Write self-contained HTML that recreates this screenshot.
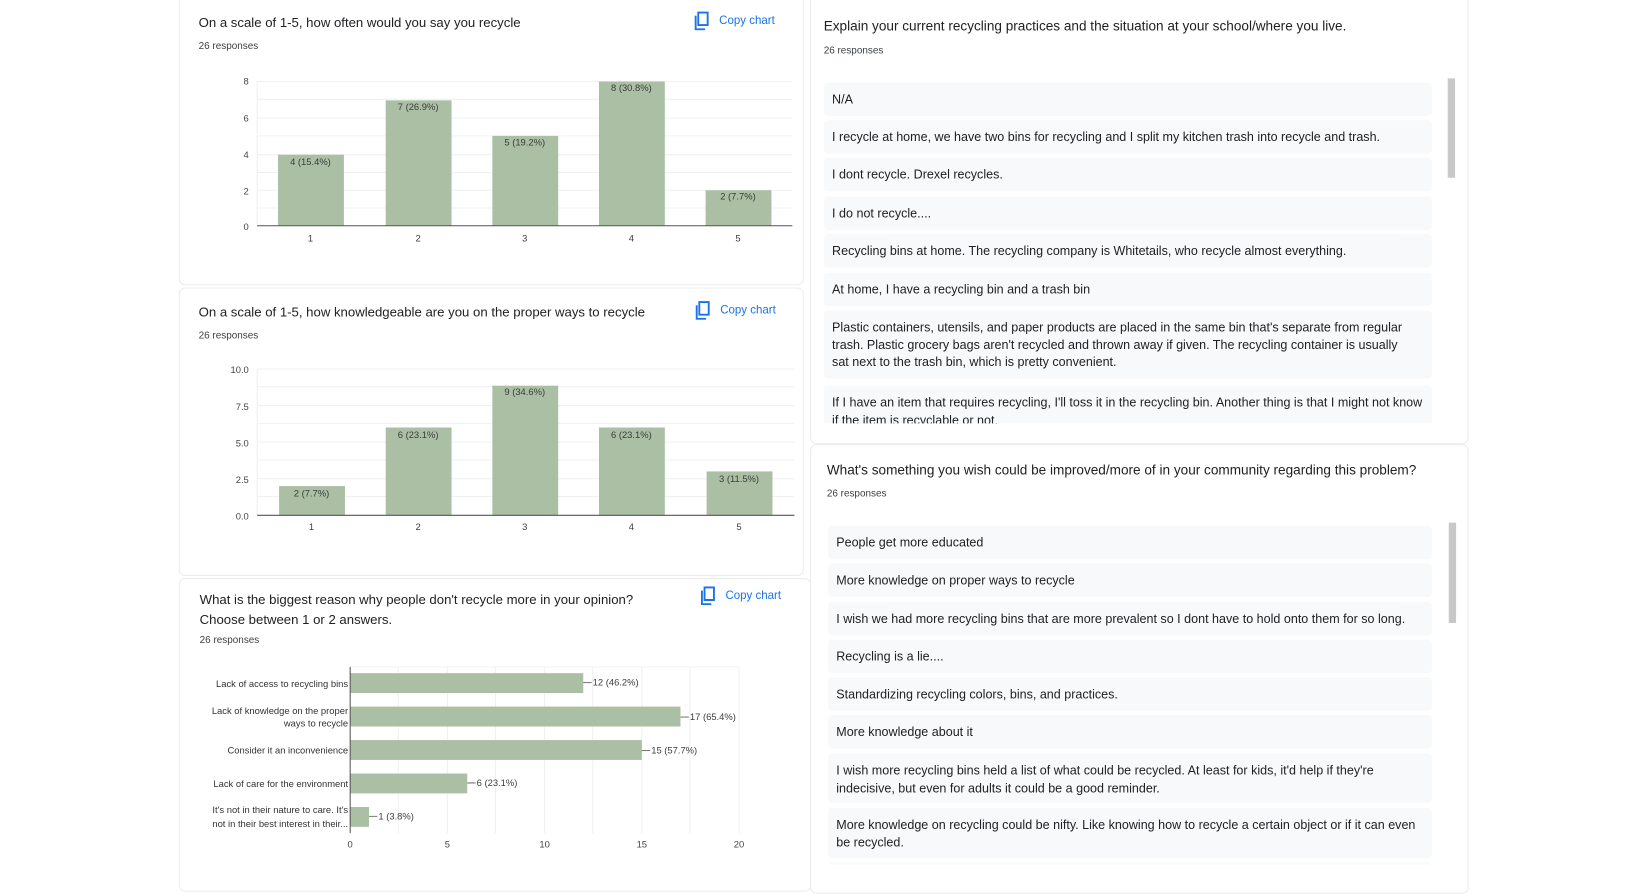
<!DOCTYPE html>
<html><head><meta charset="utf-8"><style>
html,body{margin:0;padding:0;background:#fff;width:1637px;height:880px;overflow:hidden}
#w{position:absolute;left:0;top:0;width:1566px;height:843px;transform:scale(1.0453);transform-origin:0 0;font-family:"Liberation Sans",Arial,sans-serif;color:#202124}
.card{position:absolute;background:#fff;border:1px solid #ececec;border-radius:6px;box-sizing:border-box}
.t{position:absolute;font-size:12.6px;color:#202124;white-space:nowrap}
.r{position:absolute;font-size:9.5px;color:#3c4043}
.cc{position:absolute;font-size:11px;color:#1a73e8}
.cc svg{position:absolute;left:-24px;top:-3px}
.item{position:absolute;background:#f8f9fa;border-radius:4px;font-size:12px;line-height:16.5px;color:#202124;padding:8px 8px;box-sizing:border-box}
.sb{position:absolute;width:7px;background:#c8c8c8}
svg text{font-family:"Liberation Sans",Arial,sans-serif}
</style></head><body><div id="w">

<div class="card" style="left:171px;top:-6px;width:598px;height:279px"></div>
<div class="card" style="left:171px;top:275px;width:598px;height:276px"></div>
<div class="card" style="left:171px;top:553px;width:605px;height:300px"></div>
<div class="card" style="left:775px;top:-6px;width:630px;height:431px"></div>
<div class="card" style="left:775px;top:425px;width:630px;height:430px"></div>

<div class="t" style="left:190px;top:15px">On a scale of 1-5, how often would you say you recycle</div>
<div class="r" style="left:190px;top:39px">26 responses</div>
<div class="cc" style="left:688px;top:14px"><svg width="16" height="18" viewBox="0 0 16 18"><path d="M4 1h9v12H4z" fill="none" stroke="#1a73e8" stroke-width="1.8"/><path d="M1.5 4v13h9" fill="none" stroke="#1a73e8" stroke-width="1.8"/></svg>Copy chart</div>

<div class="t" style="left:190px;top:292px">On a scale of 1-5, how knowledgeable are you on the proper ways to recycle</div>
<div class="r" style="left:190px;top:316px">26 responses</div>
<div class="cc" style="left:689px;top:291px"><svg width="16" height="18" viewBox="0 0 16 18"><path d="M4 1h9v12H4z" fill="none" stroke="#1a73e8" stroke-width="1.8"/><path d="M1.5 4v13h9" fill="none" stroke="#1a73e8" stroke-width="1.8"/></svg>Copy chart</div>

<div class="t" style="left:191px;top:565px;line-height:19px">What is the biggest reason why people don't recycle more in your opinion?<br>Choose between 1 or 2 answers.</div>
<div class="r" style="left:191px;top:607px">26 responses</div>
<div class="cc" style="left:694px;top:564px"><svg width="16" height="18" viewBox="0 0 16 18"><path d="M4 1h9v12H4z" fill="none" stroke="#1a73e8" stroke-width="1.8"/><path d="M1.5 4v13h9" fill="none" stroke="#1a73e8" stroke-width="1.8"/></svg>Copy chart</div>

<svg style="position:absolute;left:0;top:0" width="780" height="843">
<g font-size="9" fill="#444">
<g stroke="#f0f0f0"><line x1="246" y1="78" x2="758" y2="78"/><line x1="246" y1="95" x2="758" y2="95"/><line x1="246" y1="113" x2="758" y2="113"/><line x1="246" y1="130" x2="758" y2="130"/><line x1="246" y1="148" x2="758" y2="148"/><line x1="246" y1="165" x2="758" y2="165"/><line x1="246" y1="182" x2="758" y2="182"/><line x1="246" y1="199" x2="758" y2="199"/><line x1="246" y1="78" x2="246" y2="216"/></g>
<g fill="#aabfa4"><rect x="266" y="148" width="63" height="68"/><rect x="369" y="96" width="63" height="120"/><rect x="471" y="130" width="63" height="86"/><rect x="573" y="78" width="63" height="138"/><rect x="675" y="182" width="63" height="34"/></g>
<line x1="246" y1="216" x2="758" y2="216" stroke="#555"/>
<g text-anchor="end"><text x="238" y="81">8</text><text x="238" y="116">6</text><text x="238" y="151">4</text><text x="238" y="186">2</text><text x="238" y="220">0</text></g>
<g text-anchor="middle" fill="#3c3c3c"><text x="297" y="158">4 (15.4%)</text><text x="400" y="105">7 (26.9%)</text><text x="502" y="139">5 (19.2%)</text><text x="604" y="87">8 (30.8%)</text><text x="706" y="191">2 (7.7%)</text>
<text x="297" y="231">1</text><text x="400" y="231">2</text><text x="502" y="231">3</text><text x="604" y="231">4</text><text x="706" y="231">5</text></g>
<g stroke="#f0f0f0"><line x1="246" y1="353" x2="760" y2="353"/><line x1="246" y1="370" x2="760" y2="370"/><line x1="246" y1="388" x2="760" y2="388"/><line x1="246" y1="405" x2="760" y2="405"/><line x1="246" y1="423" x2="760" y2="423"/><line x1="246" y1="440" x2="760" y2="440"/><line x1="246" y1="458" x2="760" y2="458"/><line x1="246" y1="475" x2="760" y2="475"/><line x1="246" y1="353" x2="246" y2="493"/></g>
<g fill="#aabfa4"><rect x="267" y="465" width="63" height="28"/><rect x="369" y="409" width="63" height="84"/><rect x="471" y="369" width="63" height="124"/><rect x="573" y="409" width="63" height="84"/><rect x="676" y="451" width="63" height="42"/></g>
<line x1="246" y1="493" x2="760" y2="493" stroke="#555"/>
<g text-anchor="end"><text x="238" y="357">10.0</text><text x="238" y="392">7.5</text><text x="238" y="427">5.0</text><text x="238" y="462">2.5</text><text x="238" y="497">0.0</text></g>
<g text-anchor="middle" fill="#3c3c3c"><text x="298" y="475">2 (7.7%)</text><text x="400" y="419">6 (23.1%)</text><text x="502" y="378">9 (34.6%)</text><text x="604" y="419">6 (23.1%)</text><text x="707" y="461">3 (11.5%)</text>
<text x="298" y="507">1</text><text x="400" y="507">2</text><text x="502" y="507">3</text><text x="604" y="507">4</text><text x="707" y="507">5</text></g>
<g stroke="#f0f0f0"><line x1="381" y1="638" x2="381" y2="797"/><line x1="428" y1="638" x2="428" y2="797"/><line x1="474" y1="638" x2="474" y2="797"/><line x1="521" y1="638" x2="521" y2="797"/><line x1="567" y1="638" x2="567" y2="797"/><line x1="614" y1="638" x2="614" y2="797"/><line x1="660" y1="638" x2="660" y2="797"/><line x1="707" y1="638" x2="707" y2="797"/><line x1="335" y1="638" x2="707" y2="638"/></g>
<g fill="#aabfa4"><rect x="335" y="644" width="223" height="19"/><rect x="335" y="676" width="316" height="19"/><rect x="335" y="708" width="279" height="19"/><rect x="335" y="740" width="112" height="19"/><rect x="335" y="772" width="18" height="19"/></g>
<line x1="335" y1="638" x2="335" y2="797" stroke="#555"/>
<g stroke="#777"><line x1="558" y1="653" x2="566" y2="653"/><line x1="651" y1="686" x2="659" y2="686"/><line x1="614" y1="718" x2="622" y2="718"/><line x1="447" y1="749" x2="455" y2="749"/><line x1="353" y1="781" x2="361" y2="781"/></g>
<g fill="#3c3c3c"><text x="567" y="656">12 (46.2%)</text><text x="660" y="689">17 (65.4%)</text><text x="623" y="721">15 (57.7%)</text><text x="456" y="752">6 (23.1%)</text><text x="362" y="784">1 (3.8%)</text></g>
<g text-anchor="end" fill="#333"><text x="333" y="657">Lack of access to recycling bins</text><text x="333" y="683">Lack of knowledge on the proper</text><text x="333" y="695">ways to recycle</text><text x="333" y="721">Consider it an inconvenience</text><text x="333" y="753">Lack of care for the environment</text><text x="333" y="778">It's not in their nature to care. It's</text><text x="333" y="791">not in their best interest in their...</text></g>
<g text-anchor="middle"><text x="335" y="811">0</text><text x="428" y="811">5</text><text x="521" y="811">10</text><text x="614" y="811">15</text><text x="707" y="811">20</text></g>
</g></svg>

<div class="t" style="left:788px;top:17px;font-size:13px">Explain your current recycling practices and the situation at your school/where you live.</div>
<div class="r" style="left:788px;top:43px">26 responses</div>
<div class="sb" style="left:1385px;top:75px;height:95px"></div>
<div style="position:absolute;left:788px;top:79px;width:582px;height:326px;overflow:hidden">
<div class="item" style="left:0;top:0;width:582px;height:32px">N/A</div>
<div class="item" style="left:0;top:36px;width:582px;height:32px">I recycle at home, we have two bins for recycling and I split my kitchen trash into recycle and trash.</div>
<div class="item" style="left:0;top:72px;width:582px;height:32px">I dont recycle. Drexel recycles.</div>
<div class="item" style="left:0;top:109px;width:582px;height:32px">I do not recycle....</div>
<div class="item" style="left:0;top:145px;width:582px;height:32px">Recycling bins at home. The recycling company is Whitetails, who recycle almost everything.</div>
<div class="item" style="left:0;top:182px;width:582px;height:32px">At home, I have a recycling bin and a trash bin</div>
<div class="item" style="left:0;top:218px;width:582px;height:65px;padding-right:20px">Plastic containers, utensils, and paper products are placed in the same bin that's separate from regular trash. Plastic grocery bags aren't recycled and thrown away if given. The recycling container is usually sat next to the trash bin, which is pretty convenient.</div>
<div class="item" style="left:0;top:290px;width:582px;height:50px">If I have an item that requires recycling, I'll toss it in the recycling bin. Another thing is that I might not know if the item is recyclable or not.</div>
</div>

<div class="t" style="left:791px;top:442px;font-size:13px">What's something you wish could be improved/more of in your community regarding this problem?</div>
<div class="r" style="left:791px;top:467px">26 responses</div>
<div class="sb" style="left:1386px;top:500px;height:96px"></div>
<div style="position:absolute;left:792px;top:503px;width:578px;height:324px;overflow:hidden">
<div class="item" style="left:0;top:0;width:578px;height:32px">People get more educated</div>
<div class="item" style="left:0;top:36px;width:578px;height:32px">More knowledge on proper ways to recycle</div>
<div class="item" style="left:0;top:73px;width:578px;height:32px">I wish we had more recycling bins that are more prevalent so I dont have to hold onto them for so long.</div>
<div class="item" style="left:0;top:109px;width:578px;height:32px">Recycling is a lie....</div>
<div class="item" style="left:0;top:145px;width:578px;height:32px">Standardizing recycling colors, bins, and practices.</div>
<div class="item" style="left:0;top:181px;width:578px;height:32px">More knowledge about it</div>
<div class="item" style="left:0;top:218px;width:578px;height:47px;padding-right:40px">I wish more recycling bins held a list of what could be recycled. At least for kids, it'd help if they're indecisive, but even for adults it could be a good reminder.</div>
<div class="item" style="left:0;top:270px;width:578px;height:48px">More knowledge on recycling could be nifty. Like knowing how to recycle a certain object or if it can even be recycled.</div>
<div class="item" style="left:0;top:322px;width:578px;height:40px"></div>
</div>

</div></body></html>
